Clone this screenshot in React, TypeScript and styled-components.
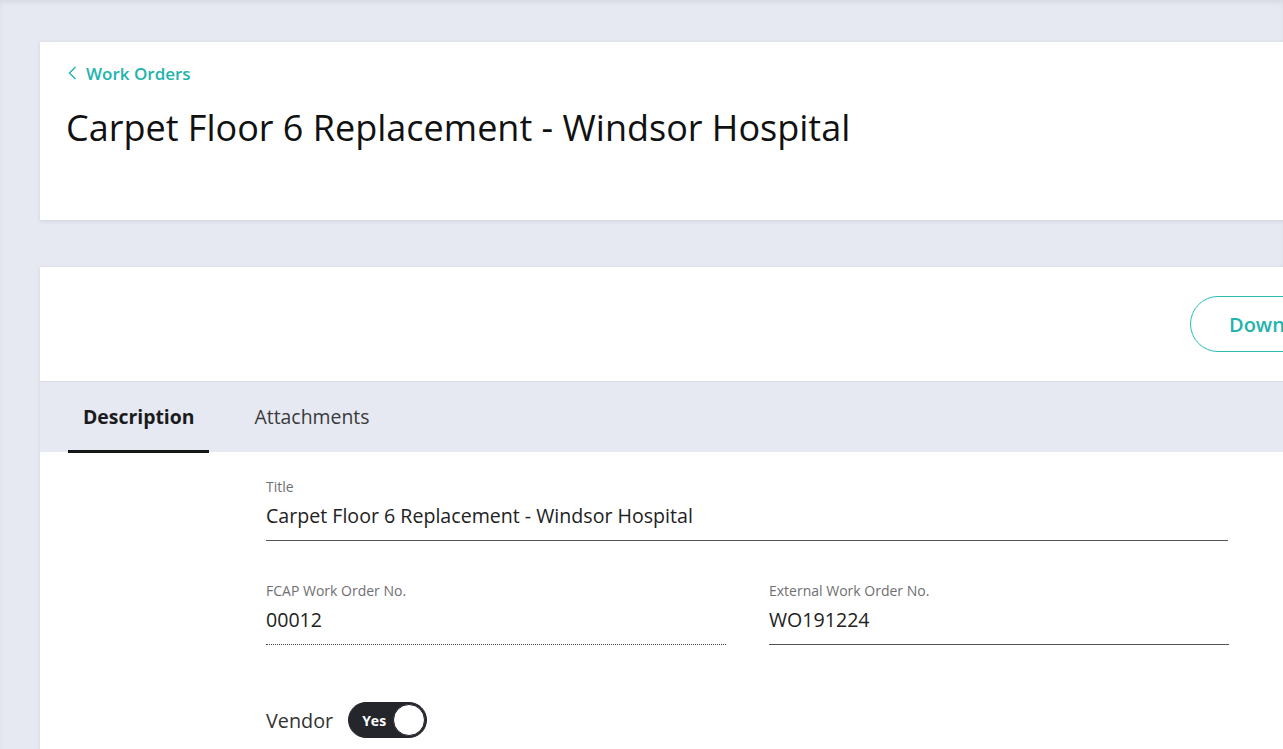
import React from "react";
import styled, { createGlobalStyle } from "styled-components";

const Global = createGlobalStyle`
  html, body { margin: 0; padding: 0; }
  body {
    background: #e6e9f1;
    font-family: "Open Sans", "Noto Sans", sans-serif;
    overflow: hidden;
    color: #1d1d1f;
  }
`;

const Page = styled.div`
  min-height: 749px;
  padding: 42px 0 0 40px;
  box-sizing: border-box;
  box-shadow: inset 0 4px 6px -2px rgba(0, 0, 0, 0.08);
  display: flex;
  flex-direction: column;
  gap: 47px;
`;

const Card = styled.section<{ $height?: number }>`
  width: 1300px;
  background: #fff;
  box-shadow: 0 1px 4px rgba(40, 50, 80, 0.12);
  ${(p) => (p.$height ? `height: ${p.$height}px;` : "padding-bottom: 60px;")}
  box-sizing: border-box;
`;

const HeaderInner = styled.div`
  padding: 21px 0 0 26px;
  display: flex;
  flex-direction: column;
`;

const BackLink = styled.a`
  display: flex;
  align-items: center;
  gap: 9px;
  color: #23b3ad;
  font-size: 17px;
  font-weight: 600;
  text-decoration: none;
  height: 20px;
  padding-left: 2px;
`;

const PageTitle = styled.h1`
  margin: 23px 0 0;
  font-size: 36px;
  font-weight: 400;
  color: #111;
  line-height: 44px;
`;

const ActionBar = styled.div`
  height: 114px;
  display: flex;
  align-items: center;
  justify-content: flex-end;
`;

const OutlineButton = styled.button`
  height: 56px;
  width: 170px;
  margin-right: -20px;
  border: 1.5px solid #2bbbb4;
  border-radius: 28px;
  background: #fff;
  color: #23b3ad;
  font-family: inherit;
  font-size: 20px;
  font-weight: 600;
  padding: 0 0 0 38px;
  text-align: left;
  white-space: nowrap;
  overflow: hidden;
`;

const Tabs = styled.div`
  height: 71px;
  background: #e6e9f1;
  border-top: 1px solid #d9dce4;
  box-sizing: border-box;
  display: flex;
  padding-left: 28px;
`;

const Tab = styled.div<{ $active?: boolean }>`
  display: flex;
  align-items: center;
  justify-content: center;
  padding: 1px ${(p) => (p.$active ? 14 : 45)}px 0 ${(p) => (p.$active ? 15 : 46)}px;
  font-size: 19.4px;
  font-weight: ${(p) => (p.$active ? 700 : 400)};
  color: ${(p) => (p.$active ? "#1b1b1d" : "#3a3a3c")};
  border-bottom: 3px solid ${(p) => (p.$active ? "#161617" : "transparent")};
  margin-bottom: -1px;
  box-sizing: border-box;
`;

const Form = styled.div`
  padding: 25px 0 0 226px;
  width: 962px;
  display: flex;
  flex-direction: column;
`;

const Row = styled.div<{ $cols?: number }>`
  display: grid;
  grid-template-columns: ${(p) => (p.$cols === 1 ? "1fr" : "460px 460px")};
  column-gap: 43px;
  margin-bottom: 40px;
`;

const Field = styled.div<{ $dotted?: boolean }>`
  display: flex;
  flex-direction: column;
  border-bottom: 1px ${(p) => (p.$dotted ? "dotted" : "solid")} ${(p) => (p.$dotted ? "#444" : "#555")};
  padding-bottom: 11px;
`;

const Label = styled.label`
  font-size: 14px;
  color: #6f6f73;
  line-height: 20px;
`;

const Value = styled.div`
  font-size: 19.6px;
  color: #222;
  line-height: 26px;
  margin-top: 6px;
`;

const ToggleRow = styled.div`
  display: flex;
  align-items: center;
  gap: 15px;
  margin-top: 17px;
`;

const ToggleLabel = styled.span`
  font-size: 19.8px;
  color: #333;
`;

const Switch = styled.div`
  width: 79px;
  height: 36px;
  border-radius: 18px;
  background: #25262b;
  border: 1px solid #25262b;
  box-sizing: border-box;
  display: flex;
  align-items: center;
  justify-content: space-between;
  padding: 0 1px 0 13px;
`;

const SwitchText = styled.span`
  color: #fff;
  font-size: 14px;
  font-weight: 700;
`;

const Knob = styled.span`
  width: 32px;
  height: 32px;
  border-radius: 50%;
  background: #fff;
  border: 1px solid #25262b;
  box-sizing: border-box;
`;

export default function App() {
  return (
    <>
      <Global />
      <Page>
        <Card $height={178}>
          <HeaderInner>
            <BackLink href="#">
              <svg width="9" height="14" viewBox="0 0 9 14" fill="none">
                <path d="M7.5 1L1.5 7l6 6" stroke="#23b3ad" strokeWidth="1.4" />
              </svg>
              Work Orders
            </BackLink>
            <PageTitle>Carpet Floor 6 Replacement - Windsor Hospital</PageTitle>
          </HeaderInner>
        </Card>
        <Card>
          <ActionBar>
            <OutlineButton>Download</OutlineButton>
          </ActionBar>
          <Tabs>
            <Tab $active>Description</Tab>
            <Tab>Attachments</Tab>
          </Tabs>
          <Form>
            <Row $cols={1}>
              <Field>
                <Label>Title</Label>
                <Value>Carpet Floor 6 Replacement - Windsor Hospital</Value>
              </Field>
            </Row>
            <Row>
              <Field $dotted>
                <Label>FCAP Work Order No.</Label>
                <Value>00012</Value>
              </Field>
              <Field>
                <Label>External Work Order No.</Label>
                <Value>WO191224</Value>
              </Field>
            </Row>
            <ToggleRow>
              <ToggleLabel>Vendor</ToggleLabel>
              <Switch>
                <SwitchText>Yes</SwitchText>
                <Knob />
              </Switch>
            </ToggleRow>
          </Form>
        </Card>
      </Page>
    </>
  );
}
